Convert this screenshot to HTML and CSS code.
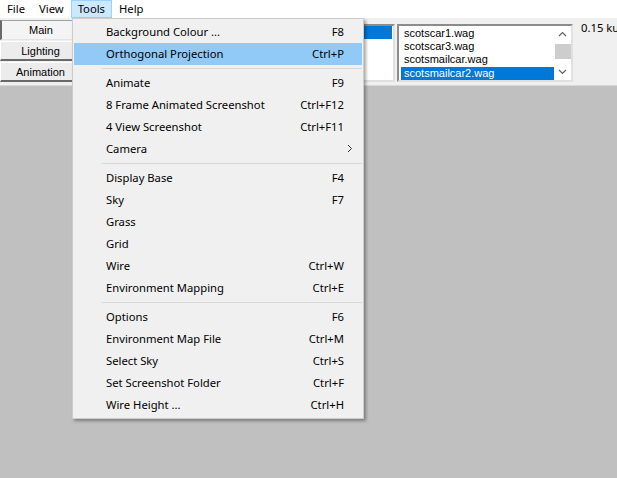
FILE: index.html
```html
<!DOCTYPE html>
<html>
<head>
<meta charset="utf-8">
<link rel="stylesheet" href="styles.css">
</head>
<body>
<div class="app">
  <nav class="menubar">
    <span class="mb-item">File</span>
    <span class="mb-item">View</span>
    <span class="mb-item active">Tools</span>
    <span class="mb-item">Help</span>
  </nav>
  <div class="toolbar">
    <div class="tabs">
      <div class="tab pressed">Main</div>
      <div class="tab">Lighting</div>
      <div class="tab">Animation</div>
    </div>
    <div class="listbox lb1">
      <div class="lb-row sel">&nbsp;</div>
    </div>
    <div class="listbox lb2">
      <div class="lb-items">
        <div class="lb-row">scotscar1.wag</div>
        <div class="lb-row">scotscar3.wag</div>
        <div class="lb-row">scotsmailcar.wag</div>
        <div class="lb-row sel">scotsmailcar2.wag</div>
      </div>
      <div class="scrollbar">
        <svg class="sb-arrow" width="17" height="17" viewBox="0 0 17 17"><path d="M5 10 L8.5 6.5 L12 10" fill="none" stroke="#606060" stroke-width="1.2"/></svg>
        <div class="sb-track"><div class="sb-thumb"></div></div>
        <svg class="sb-arrow" width="17" height="17" viewBox="0 0 17 17"><path d="M5 7 L8.5 10.5 L12 7" fill="none" stroke="#606060" stroke-width="1.2"/></svg>
      </div>
    </div>
    <div class="dist">0.15 ku</div>
  </div>
  <div class="canvas"></div>

  <div class="menu">
    <div class="mi"><span class="lbl">Background Colour ...</span><span class="sc">F8</span></div>
    <div class="mi hot"><span class="lbl">Orthogonal Projection</span><span class="sc">Ctrl+P</span></div>
    <div class="sep"></div>
    <div class="mi"><span class="lbl">Animate</span><span class="sc">F9</span></div>
    <div class="mi"><span class="lbl">8 Frame Animated Screenshot</span><span class="sc">Ctrl+F12</span></div>
    <div class="mi"><span class="lbl">4 View Screenshot</span><span class="sc">Ctrl+F11</span></div>
    <div class="mi"><span class="lbl">Camera</span><span class="sub"><svg width="6" height="9" viewBox="0 0 6 9"><path d="M1 1 L4.5 4.5 L1 8" fill="none" stroke="#333" stroke-width="1"/></svg></span></div>
    <div class="sep"></div>
    <div class="mi"><span class="lbl">Display Base</span><span class="sc">F4</span></div>
    <div class="mi"><span class="lbl">Sky</span><span class="sc">F7</span></div>
    <div class="mi"><span class="lbl">Grass</span></div>
    <div class="mi"><span class="lbl">Grid</span></div>
    <div class="mi"><span class="lbl">Wire</span><span class="sc">Ctrl+W</span></div>
    <div class="mi"><span class="lbl">Environment Mapping</span><span class="sc">Ctrl+E</span></div>
    <div class="sep"></div>
    <div class="mi"><span class="lbl">Options</span><span class="sc">F6</span></div>
    <div class="mi"><span class="lbl">Environment Map File</span><span class="sc">Ctrl+M</span></div>
    <div class="mi"><span class="lbl">Select Sky</span><span class="sc">Ctrl+S</span></div>
    <div class="mi"><span class="lbl">Set Screenshot Folder</span><span class="sc">Ctrl+F</span></div>
    <div class="mi"><span class="lbl">Wire Height ...</span><span class="sc">Ctrl+H</span></div>
  </div>
</div>
</body>
</html>
```

FILE: styles.css
```css
* { box-sizing: border-box; }
html, body { margin: 0; padding: 0; }
body {
  width: 617px;
  height: 478px;
  overflow: hidden;
  font-family: "Noto Sans", "Open Sans", sans-serif;
  font-size: 11.25px;
  color: #000;
}
.app {
  position: relative;
  width: 617px;
  height: 478px;
  display: flex;
  flex-direction: column;
}
.menubar {
  display: flex;
  height: 18px;
  background: #fff;
  align-items: stretch;
}
.mb-item {
  padding: 0 6px;
  line-height: 16px;
  border: 1px solid transparent;
}
.mb-item.active {
  background: #cce8ff;
  border-color: #99d1ff;
}
.toolbar {
  height: 68px;
  background: #f0f0f0;
  display: flex;
  align-items: flex-start;
  border-bottom: 1px solid #d8d8d8;
}
.toolbar > * { flex: none; }
.tabs {
  width: 81px;
  padding-top: 2px;
  display: flex;
  flex-direction: column;
  gap: 1px;
}
.tab {
  height: 20px;
  font-family: "Liberation Sans", Arial, sans-serif;
  font-size: 11px;
  line-height: 18px;
  text-align: center;
  background: #ececec;
  border-top: 1px solid #fff;
  border-left: 1px solid #fff;
  border-right: 1px solid #a0a0a0;
  border-bottom: 2px solid #696969;
}
.tab.pressed {
  border-top: 1px solid #a0a0a0;
  border-left: 2px solid #696969;
  border-right: 1px solid #e3e3e3;
  border-bottom: 1px solid #e3e3e3;
  background: #f4f4f4;
}
.listbox {
  margin-top: 6px;
  height: 58px;
  background: #fff;
  border-top: 2px solid #8c8c8c;
  border-left: 2px solid #8c8c8c;
  border-right: 2px solid #e0e0e0;
  border-bottom: 2px solid #e0e0e0;
  font-family: "Liberation Sans", Arial, sans-serif;
  font-size: 11px;
}
.lb1 {
  margin-left: 209px;
  width: 105px;
  padding: 0 1px;
}
.lb2 {
  margin-left: 2px;
  width: 176px;
  display: flex;
  padding-left: 1px;
}
.lb-items {
  flex: 1;
  display: flex;
  flex-direction: column;
  padding-top: 1px;
}
.lb-row {
  height: 13px;
  line-height: 13px;
  padding-left: 3px;
  white-space: nowrap;
}
.lb2 .lb-row { padding-left: 4px; }
.lb2 .lb-row.sel { margin-top: 1px; margin-left: 1px; padding-left: 3px; }
.lb-row.sel {
  background: #0078d7;
  color: #fff;
}
.scrollbar {
  width: 17px;
  display: flex;
  flex-direction: column;
  background: #fff;
}
.sb-arrow { display: block; flex: none; }
.sb-track {
  flex: 1;
  padding: 1px 0 1px 1px;
}
.sb-thumb {
  height: 15px;
  background: #cdcdcd;
}
.dist {
  margin-left: 8px;
  margin-top: 2px;
  white-space: nowrap;
  font-size: 11.25px;
}
.canvas {
  flex: 1;
  background: #c0c0c0;
}
.menu {
  position: absolute;
  left: 72px;
  top: 18px;
  width: 292px;
  background: #f0f0f0;
  border: 1px solid #cccccc;
  padding: 2px 1px;
  box-shadow: 2px 2px 3px rgba(0, 0, 0, 0.35);
}
.mi {
  height: 22px;
  display: flex;
  align-items: center;
  padding-left: 32px;
  padding-right: 18px;
  white-space: nowrap;
  padding-bottom: 1px;
}
.mi.hot { background: #91c9f7; }
.mi .lbl { flex: 1; }
.mi .sub { margin-right: -9px; display: flex; }
.sep {
  height: 7px;
  margin-left: 28px;
  display: flex;
  align-items: center;
}
.sep::after {
  content: "";
  display: block;
  width: 100%;
  height: 1px;
  background: #d7d7d7;
}
```
